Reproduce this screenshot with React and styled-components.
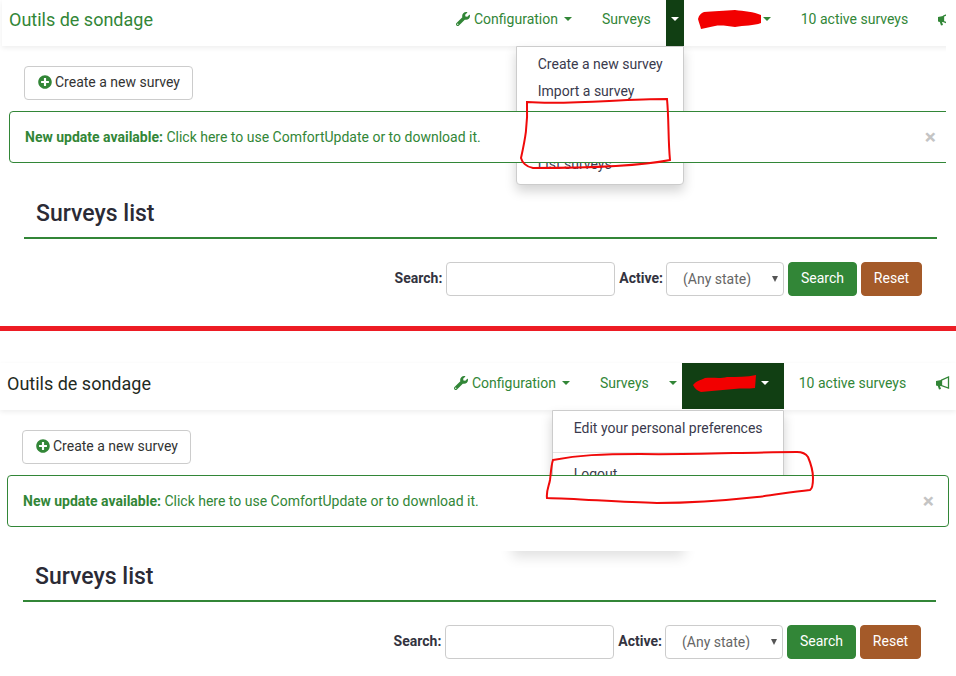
import styled, { createGlobalStyle } from "styled-components";
import { FaWrench, FaPlusCircle } from "react-icons/fa";

const GREEN = "#328637";
const DARK_GREEN = "#113f13";

const Global = createGlobalStyle`
  html, body {
    margin: 0;
    padding: 0;
    background: #fff;
    overflow: hidden;
  }
  body {
    font-family: Roboto, "Liberation Sans", sans-serif;
    font-size: 14px;
  }
`;

const Panel = styled.section`
  position: relative;
  width: ${(p) => p.$width}px;
  height: ${(p) => p.$height}px;
  padding: ${(p) => p.$top}px 0 0 ${(p) => p.$left}px;
  box-sizing: border-box;
  overflow: hidden;
`;

const Sheet = styled.div`
  width: 956px;
`;

const Nav = styled.nav`
  display: flex;
  align-items: stretch;
  height: ${(p) => p.$height}px;
  background: #fff;
  box-shadow: 0 2px 5px rgba(0, 0, 0, 0.07);
`;

const Brand = styled.a`
  flex: 0 0 439px;
  box-sizing: border-box;
  padding: 0 0 ${(p) => p.$lift}px 7px;
  display: flex;
  align-items: center;
  font-size: 18px;
  color: ${(p) => p.$color};
`;

const NavItem = styled.a`
  position: relative;
  flex: 0 0 auto;
  box-sizing: border-box;
  display: flex;
  align-items: center;
  height: 46px;
  padding: ${(p) => `0 ${p.$toggle ? 5 : 15}px ${p.$lift}px`};
  color: ${(p) => (p.$open ? "#fff" : GREEN)};
  background: ${(p) => (p.$open ? DARK_GREEN : "transparent")};
  white-space: nowrap;
`;

const Caret = styled.i`
  display: inline-block;
  width: 0;
  height: 0;
  margin-left: ${(p) => p.$gap}px;
  border-top: 4px solid currentColor;
  border-left: 4px solid transparent;
  border-right: 4px solid transparent;
`;

const NavIcon = styled.span`
  display: inline-flex;
  margin-right: 4px;
  font-size: 14px;
`;

const Menu = styled.ul`
  position: absolute;
  top: calc(100% + ${(p) => p.$drop}px);
  right: 0;
  width: ${(p) => p.$width}px;
  margin: 0;
  padding: 4px 0 6px;
  list-style: none;
  box-sizing: border-box;
  background: #fff;
  border: 1px solid #ccc;
  border-radius: 0 0 4px 4px;
  box-shadow: 0 6px 12px rgba(0, 0, 0, 0.175);
`;

const MenuItem = styled.li`
  height: 27px;
  line-height: 27px;
  padding-left: 21px;
  color: #3a3a4d;
`;

const MenuDivider = styled.li`
  height: 1px;
  margin: ${(p) => p.$above}px 0 ${(p) => p.$below}px;
  background: #e5e5e5;
`;

const Body = styled.div`
  display: flex;
  flex-direction: column;
  align-items: flex-start;
`;

const NewButton = styled.a`
  box-sizing: border-box;
  display: flex;
  align-items: center;
  gap: 3px;
  width: 169px;
  height: 34px;
  margin: 20px 0 11px 22px;
  padding: 0 0 2px 13px;
  border: 1px solid #ccc;
  border-radius: 4px;
  color: #333;
  svg {
    color: ${GREEN};
    font-size: 14px;
  }
`;

const Alert = styled.div`
  position: relative;
  z-index: 2;
  box-sizing: border-box;
  display: flex;
  align-items: center;
  justify-content: space-between;
  width: 942px;
  height: 52px;
  margin-left: 7px;
  padding: 0 14px 1px 15px;
  background: #fff;
  border: 1px solid ${GREEN};
  border-radius: 4px;
  color: ${GREEN};
  strong {
    font-weight: 700;
  }
`;

const Close = styled.span`
  padding-top: 2px;
  font-size: 21px;
  font-weight: 700;
  line-height: 1;
  color: #c4c4c4;
`;

const ListSection = styled.div`
  width: 913px;
  margin-left: ${(p) => p.$left}px;
`;

const ListTitle = styled.h3`
  box-sizing: border-box;
  height: ${(p) => p.$height}px;
  margin: 0;
  padding: 0 0 9px 12px;
  display: flex;
  align-items: flex-end;
  border-bottom: 2px solid ${GREEN};
  font-size: 23px;
  font-weight: 500;
  line-height: 28px;
  color: #2b2b36;
`;

const FilterRow = styled.form`
  display: flex;
  align-items: center;
  justify-content: flex-end;
  margin-top: 23px;
  padding-right: 15px;
`;

const Label = styled.label`
  margin: 0 ${(p) => p.$gap}px 2px 0;
  font-weight: 700;
  color: #333340;
`;

const SearchInput = styled.input`
  box-sizing: border-box;
  width: 169px;
  height: 34px;
  margin-right: 4px;
  background: #fff;
  border: 1px solid #ccc;
  border-radius: 4px;
`;

const SelectWrap = styled.div`
  position: relative;
  margin-right: 4px;
  &::after {
    content: "";
    position: absolute;
    top: 14px;
    right: 6px;
    border-top: 6px solid #555;
    border-left: 3px solid transparent;
    border-right: 3px solid transparent;
  }
`;

const StateSelect = styled.select`
  display: block;
  box-sizing: border-box;
  width: 118px;
  height: 34px;
  padding-left: 16px;
  appearance: none;
  background: #fff;
  border: 1px solid #ccc;
  border-radius: 4px;
  font-family: inherit;
  font-size: 14px;
  color: #666;
`;

const ActionButton = styled.button`
  box-sizing: border-box;
  width: ${(p) => p.$width}px;
  height: 34px;
  margin-left: ${(p) => p.$gap}px;
  padding: 0 0 2px;
  background: ${(p) => p.$color};
  border: 1px solid ${(p) => p.$color};
  border-radius: 4px;
  font-family: inherit;
  font-size: 14px;
  color: #fff;
`;

const Divider = styled.div`
  height: 5px;
  background: #ed1c24;
`;

const Scribble = styled.svg`
  position: absolute;
  z-index: 3;
  top: 0;
  left: 0;
  pointer-events: none;
`;

// shadow left over under the second panel's alert, with nothing above it
const StraySlice = styled.div`
  position: absolute;
  left: 490px;
  top: 220px;
  width: 216px;
  height: 26px;
  overflow: hidden;
  &::before {
    content: "";
    display: block;
    height: 40px;
    margin: -40px 22px 0;
    box-shadow: 0 6px 12px rgba(0, 0, 0, 0.12);
  }
`;

const RedactionMark = styled.svg`
  flex: 0 0 auto;
  margin-left: ${(p) => p.$offset}px;
`;

const Redaction = ({ d, offset }) => (
  <RedactionMark $offset={offset} width="63" height="20" viewBox="0 0 63 20" fill="#f20000">
    <path d={d} />
  </RedactionMark>
);

const Bullhorn = () => (
  <svg width="14" height="14" viewBox="0 0 14 14">
    <path d="M0 5L5 4L5 10L4 10L5 13L3 13.5L1.8 10L0 9.5Z" fill={GREEN} />
    <path d="M5.5 4.2L12.5 1V12L5.5 9.6Z" fill="#fff" stroke={GREEN} strokeWidth="1.3" />
  </svg>
);

const NavRow = ({ height, lift, brandColor, open, redaction, offset, caretGap, drop, menu }) => (
  <Nav $height={height}>
    <Brand $color={brandColor} $lift={lift}>
      Outils de sondage
    </Brand>
    <NavItem $lift={lift}>
      <NavIcon>
        <FaWrench />
      </NavIcon>
      Configuration
      <Caret $gap={6} />
    </NavItem>
    <NavItem $lift={lift}>Surveys</NavItem>
    <NavItem $toggle $lift={lift} $open={open === "surveys"}>
      <Caret $gap={0} />
      {open === "surveys" && menu(drop)}
    </NavItem>
    <NavItem $lift={lift} $open={open === "user"}>
      <Redaction d={redaction} offset={offset} />
      <Caret $gap={caretGap} />
      {open === "user" && menu(drop)}
    </NavItem>
    <NavItem $lift={lift}>10 active surveys</NavItem>
    <NavItem $lift={lift}>
      <Bullhorn />
    </NavItem>
  </Nav>
);

const Content = ({ listLeft, titleHeight }) => (
  <Body>
    <NewButton>
      <FaPlusCircle />
      Create a new survey
    </NewButton>
    <Alert>
      <span>
        <strong>New update available:</strong> Click here to use ComfortUpdate or to download it.
      </span>
      <Close>×</Close>
    </Alert>
    <ListSection $left={listLeft}>
      <ListTitle $height={titleHeight}>Surveys list</ListTitle>
      <FilterRow>
        <Label $gap={4}>Search:</Label>
        <SearchInput type="text" />
        <Label $gap={3}>Active:</Label>
        <SelectWrap>
          <StateSelect defaultValue="any">
            <option value="any">(Any state)</option>
          </StateSelect>
        </SelectWrap>
        <ActionButton type="button" $width={69} $color={GREEN} $gap={0}>
          Search
        </ActionButton>
        <ActionButton type="button" $width={61} $color="#a45a29" $gap={4}>
          Reset
        </ActionButton>
      </FilterRow>
    </ListSection>
  </Body>
);

const App = () => (
  <>
    <Global />
    <Panel $width={946} $height={326} $top={0} $left={2}>
      <Sheet>
        <NavRow
          height={46}
          lift={8}
          brandColor={GREEN}
          open="surveys"
          offset={-1}
          caretGap={2}
          drop={0}
          redaction="M0 10C1 6 3 4 6 3C15 2 27 2 37 1C46 2 56 3 63 6L63 14C56 17 46 16 37 18C30 17 22 16 17 17C12 18 8 19 3 20C2 16 1 14 0 10Z"
          menu={(drop) => (
            <Menu $width={168} $drop={drop}>
              <MenuItem>Create a new survey</MenuItem>
              <MenuItem>Import a survey</MenuItem>
              <MenuDivider $above={23} $below={22} />
              <MenuItem>List surveys</MenuItem>
            </Menu>
          )}
        />
        <Content listLeft={22} titleHeight={76} />
      </Sheet>
      <Scribble width="946" height="326" fill="none" stroke="#f00a0a" strokeWidth="2">
        <path d="M527 102C570 105 620 99 667 99C669 120 668 140 670 160C640 166 580 168 533 168C526 167 522 162 521 158C525 140 528 125 527 102Z" />
      </Scribble>
    </Panel>
    <Divider />
    <Panel $width={956} $height={345} $top={32} $left={0}>
      <Sheet>
        <NavRow
          height={47}
          lift={6}
          brandColor="#1f2a22"
          open="user"
          offset={-4}
          caretGap={5}
          drop={1}
          redaction="M0 12C3 8 8 7 12 5C20 4 26 6 34 4C44 4 54 4 63 2L62 15C55 16 48 15 41 16C30 17 18 18 8 19C5 18 2 16 0 12Z"
          menu={(drop) => (
            <Menu $width={232} $drop={drop}>
              <MenuItem>Edit your personal preferences</MenuItem>
              <MenuDivider $above={10} $below={8} />
              <MenuItem>Logout</MenuItem>
            </Menu>
          )}
        />
        <Content listLeft={23} titleHeight={75} />
      </Sheet>
      <StraySlice />
      <Scribble width="956" height="345" fill="none" stroke="#f00a0a" strokeWidth="2">
        <path d="M553 129C580 124 600 123 640 123C690 124 750 121 797 121C803 121 806 123 808 126C811 133 813 140 813 147C813 152 812 158 810 159C790 161 775 164 757 166C720 170 690 172 657 172C620 171 580 168 547 167C546 160 549 155 550 149C551 142 551 135 553 129Z" />
      </Scribble>
    </Panel>
  </>
);

export default App;
